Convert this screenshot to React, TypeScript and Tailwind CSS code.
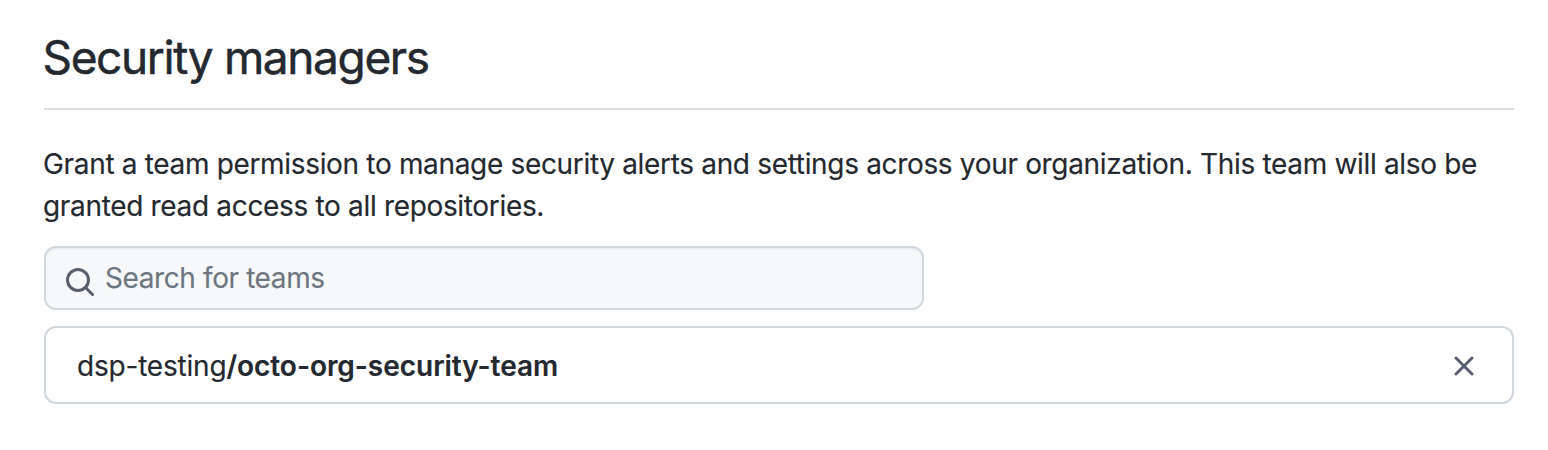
export default function App() {
  return (
    <main className="h-[450px] w-[1548px] bg-white pl-11 pr-[34px] font-['Inter',sans-serif] text-[#24292f]">
      <header className="flex h-[110px] items-start border-b-2 border-[#d8dee4] pt-7">
        <h1 className="-ml-[1.5px] whitespace-nowrap text-[46px] font-normal leading-[58px] tracking-[-1.37px] [-webkit-text-stroke:0.5px_#24292f]">Security managers</h1>
      </header>
      <p className="-ml-px mt-[33px] whitespace-nowrap text-[28px] leading-[42px] tracking-[-0.33px] [-webkit-text-stroke:0.15px_#24292f]">
        <span className="block">Grant a team permission to manage security alerts and settings across your organization. This team will also be</span>
        <span className="block">granted read access to all repositories.</span>
      </p>
      <label className="mt-[19px] flex h-16 w-[880px] items-center rounded-xl border-2 border-[#d0d7de] bg-[#f6f8fa] pl-5 shadow-[inset_0_2px_0_rgba(208,215,222,0.2)]">
        <svg className="mt-[7px] h-7 w-7 shrink-0" viewBox="0 0 28 28" fill="none" stroke="#57606a" strokeWidth="3" strokeLinecap="round">
          <circle cx="12" cy="12" r="10.5" />
          <path d="M20 20l6.5 6.5" />
        </svg>
        <span className="ml-[11px] whitespace-nowrap text-[28px] leading-[42px] tracking-[-0.4px] text-[#6e7781] [-webkit-text-stroke:0.15px_#6e7781]">Search for teams</span>
      </label>
      <div className="mt-4 flex h-[78px] items-center justify-between rounded-xl border-2 border-[#d0d7de] pl-[31px] pr-[38px] pt-0.5">
        <span className="whitespace-nowrap text-[28px] leading-[42px] tracking-[-0.2px] [-webkit-text-stroke:0.15px_#24292f]">dsp-testing<b className="font-semibold tracking-[-0.03px]">/octo-org-security-team</b></span>
        <button aria-label="Remove team">
          <svg className="h-5 w-5" viewBox="0 0 20 20" fill="none" stroke="#57606a" strokeWidth="3" strokeLinecap="round">
            <path d="M2 2l16 16M18 2L2 18" />
          </svg>
        </button>
      </div>
    </main>
  );
}
